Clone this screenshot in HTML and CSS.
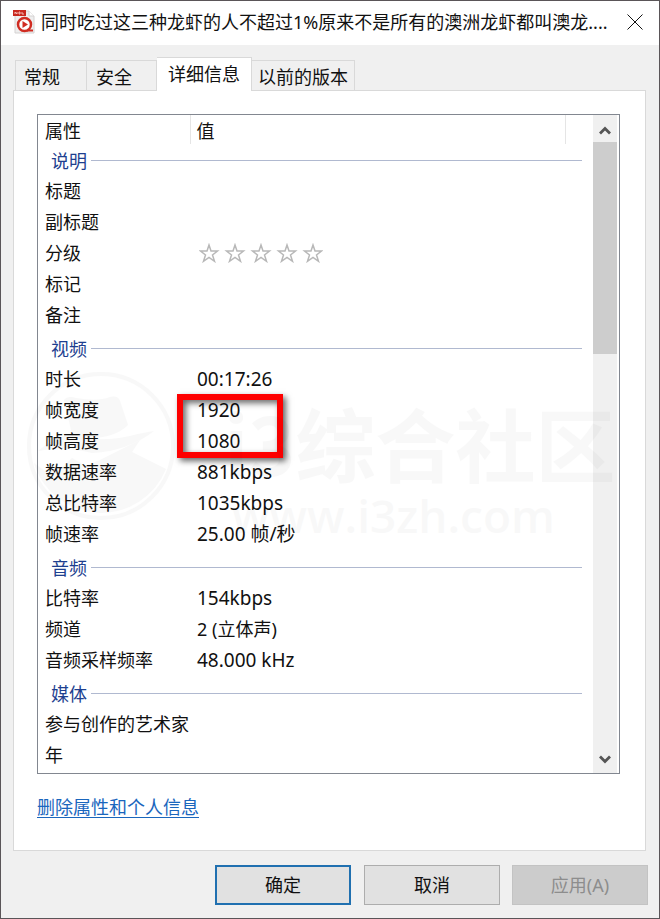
FILE: index.html
```html
<!DOCTYPE html>
<html lang="zh-CN">
<head>
<meta charset="utf-8">
<meta name="viewport" content="width=device-width, initial-scale=1">
<title>属性</title>
<link rel="stylesheet" href="styles.css">
</head>
<body>
<div class="dialog">
  <header class="titlebar">
    <svg class="app-icon" viewBox="0 0 22 24" aria-hidden="true">
      <path d="M2 1h14l5 5v17H2z" fill="#eee" stroke="#d5d2d2"/>
      <path d="M16 1v5h5" fill="#fff" stroke="#d5d2d2"/>
      <path d="M0 0h13v6H0z" fill="#c8281e"/>
      <path d="M2 4V2l2 2V2M6 2h1v2H6zM9 2v2h2" fill="none" stroke="#f3b9b4"/>
      <circle cx="11.500" cy="14.500" r="6.500" fill="#fff" stroke="#d02c22" stroke-width="2.500"/>
      <path d="M9.500 11v7l5.500-3.500z" fill="#d02c22"/>
      <path d="M14 20.500h6" stroke="#d02c22" stroke-width="2"/>
    </svg>
    <h1 class="title">同时吃过这三种龙虾的人不超过1%原来不是所有的澳洲龙虾都叫澳龙....</h1>
    <button class="close" type="button" aria-label="关闭">
      <svg viewBox="0 0 16 16" width="16" height="16" aria-hidden="true"><path d="M.5.5l15 15M15.500.5l-15 15" stroke="#111" fill="none"/></svg>
    </button>
  </header>
  <main class="body">
    <div class="tabs" role="tablist">
      <button class="tab tab-general" type="button" role="tab">常规</button>
      <button class="tab tab-security" type="button" role="tab">安全</button>
      <button class="tab active" type="button" role="tab" aria-selected="true">详细信息</button>
      <button class="tab" type="button" role="tab">以前的版本</button>
    </div>
    <section class="panel">
      <div class="list">
        <table class="props">
          <colgroup><col class="col-name"><col><col class="col-end"></colgroup>
          <thead><tr><th>属性</th><th>值</th><th></th></tr></thead>
          <tbody>
            <tr class="group"><th colspan="3"><span>说明</span></th></tr>
            <tr><td>标题</td><td></td></tr>
            <tr><td>副标题</td><td></td></tr>
            <tr><td>分级</td><td>
              <svg class="stars" viewBox="0 0 124 20" width="124" height="20" aria-label="未分级">
                <defs><path id="star" d="M10 2l2 6h6.500l-5 4 2 6.300-5.500-3.800-5.500 3.800 2-6.300-5-4H8z" fill="#fff" stroke="#b8b8b8" stroke-width="1.500"/></defs>
                <use href="#star"/><use href="#star" x="26"/><use href="#star" x="52"/><use href="#star" x="78"/><use href="#star" x="104"/>
              </svg></td></tr>
            <tr><td>标记</td><td></td></tr>
            <tr><td>备注</td><td></td></tr>
            <tr class="group"><th colspan="3"><span>视频</span></th></tr>
            <tr><td>时长</td><td>00:17:26</td></tr>
            <tr><td>帧宽度</td><td class="marked">1920<div class="highlight"></div></td></tr>
            <tr><td>帧高度</td><td>1080</td></tr>
            <tr><td>数据速率</td><td>881kbps</td></tr>
            <tr><td>总比特率</td><td>1035kbps</td></tr>
            <tr><td>帧速率</td><td>25.00 帧/秒</td></tr>
            <tr class="group"><th colspan="3"><span>音频</span></th></tr>
            <tr><td>比特率</td><td>154kbps</td></tr>
            <tr><td>频道</td><td class="mixed">2 (立体声)</td></tr>
            <tr><td>音频采样频率</td><td>48.000 kHz</td></tr>
            <tr class="group"><th colspan="3"><span>媒体</span></th></tr>
            <tr><td>参与创作的艺术家</td><td></td></tr>
            <tr><td>年</td><td></td></tr>
          </tbody>
        </table>
        <div class="scrollbar">
          <button class="arrow" type="button" aria-label="向上滚动"><svg viewBox="0 0 12 9" width="12" height="9"><path d="M1 7.500l5-5 5 5" fill="none" stroke="#555" stroke-width="2.800"/></svg></button>
          <div class="thumb"></div>
          <button class="arrow arrow-down" type="button" aria-label="向下滚动"><svg viewBox="0 0 12 9" width="12" height="9"><path d="M1 1.500l5 5 5-5" fill="none" stroke="#555" stroke-width="2.800"/></svg></button>
        </div>
      </div>
      <a class="remove" href="#">删除属性和个人信息</a>
    </section>
    <footer class="actions">
      <button class="btn primary" type="button">确定</button>
      <button class="btn" type="button">取消</button>
      <button class="btn" type="button" disabled>应用(A)</button>
    </footer>
  </main>
  <div class="watermark" aria-hidden="true">
    <svg viewBox="0 0 150 150" width="150" height="150">
      <circle cx="75" cy="75" r="72" fill="none" stroke="#000" stroke-width="4"/>
      <path d="M12 80q16-14 34-17l-8-34q4-5 12-2 22 4 34-1 8-2 10 4l8 24q-14 14-44 13 26 4 54-4l16-3q-26 20-62 22Q36 74 12 80z"/>
      <path d="M8 92l12 9q12 0 20-8l6-6 14 8 14-6 40-20-8 12 34 17A70 70 0 0 1 8 92z"/>
    </svg>
    <div class="mark-text"><div class="mark-name">i3综合社区</div><div class="mark-url">www.i3zh.com</div></div>
  </div>
</div>
</body>
</html>
```
FILE: styles.css
```css
* { box-sizing: border-box; }
body {
  margin: 0;
  background: #f0f0f0;
  color: #111;
  font: 18px/24px "Noto Sans", "Noto Sans CJK SC", sans-serif;
}
button { font: inherit; color: inherit; border: 0; background: none; padding: 0; }
.dialog {
  position: relative;
  min-height: 100vh;
  border: 1px solid #5a5558;
  display: flex;
  flex-direction: column;
}
.titlebar {
  display: flex;
  align-items: center;
  height: 44px;
  padding: 0 16px 2px 12px;
  background: #fff;
}
.app-icon { width: 22px; height: 24px; flex: none; }
.title {
  flex: 1;
  min-width: 0;
  margin: 0 0 0 6px;
  font-size: 18px;
  font-weight: 400;
  white-space: nowrap;
  overflow: hidden;
}
.close { display: flex; margin-left: 12px; }
.body { flex: 1; display: flex; flex-direction: column; padding: 12px 13px 13px 12px; }
.tabs { display: flex; align-items: flex-end; padding-left: 2px; }
.tab {
  height: 30px;
  padding: 3px 6px 0 6px;
  border: 1px solid #d9d9d9;
  border-bottom: 0;
  border-left-width: 0;
  white-space: nowrap;
}
.tab-general { width: 72px; padding-left: 8px; border-left-width: 1px; text-align: left; }
.tab-security { width: 70px; text-align: left; padding-left: 9px; }
.tab.active {
  position: relative;
  height: 34px;
  margin-bottom: -1px;
  padding: 0 11px 2px;
  background: #fff;
}
.panel { flex: 1; padding: 23px 25px 0 23px; border: 1px solid #d9d9d9; background: #fff; }
.list { display: flex; border: 1px solid #828790; }
.props { flex: 1; border-collapse: collapse; table-layout: fixed; width: 0; margin-bottom: 1px; }
.col-name { width: 152px; }
.col-end { width: 28px; }
.props th, .props td {
  height: 31px;
  padding: 0 0 3px 7px;
  font-weight: 400;
  text-align: left;
  white-space: nowrap;
}
.props td + td { font-size: 19px; }
.props td.mixed { font-size: 18px; }
.props thead th { height: 29px; padding: 3px 0 0 7px; }
.props thead th + th { border-left: 1px solid #e5e5e5; padding-left: 6px; }
.props .group th { height: 33px; padding: 0 11px 0 13px; color: #1e3f8f; }
.group span { display: flex; align-items: center; gap: 4px; }
.group span::after { content: ""; flex: 1; height: 1px; background: #b0b9d0; }
.stars { display: block; margin-left: 2px; }
.marked { position: relative; }
.highlight {
  position: absolute;
  left: -13px;
  top: -2px;
  width: 106px;
  height: 64px;
  border: 6px solid #fe0000;
  box-shadow: 3px 3px 6px #0009, inset 3px 3px 6px #0009;
}
.scrollbar { width: 26px; display: flex; flex-direction: column; padding-right: 2px; background: #f0f0f0 content-box; }
.arrow { height: 27px; padding-top: 4px; display: flex; align-items: center; justify-content: center; }
.arrow-down { margin-top: auto; padding-top: 0; }
.thumb { height: 212px; background: #cdcdcd; }
.remove { display: inline-block; margin-top: 21px; color: #1a66bd; text-underline-offset: 3px; }
.actions { display: flex; justify-content: flex-end; gap: 12px; padding-top: 14px; margin-right: -2px; }
.btn { width: 136px; height: 40px; border: 1px solid #adadad; background: #e1e1e1; }
.btn.primary { border: 2px solid #2070b0; margin-right: 1px; }
.btn:disabled { background: #ccc; border-color: #c3c3c3; color: #8d8d8d; }
.watermark {
  position: absolute;
  left: 25px;
  top: 370px;
  display: flex;
  opacity: 0.024;
  color: #000;
  pointer-events: none;
}
.mark-text { padding: 28px 0 0 48px; white-space: nowrap; }
.mark-name { font: 700 80px/84px "Noto Sans CJK SC", sans-serif; }
.mark-url { padding: 6px 0 0 8px; font: 600 46px/52px "Open Sans", sans-serif; }
```
